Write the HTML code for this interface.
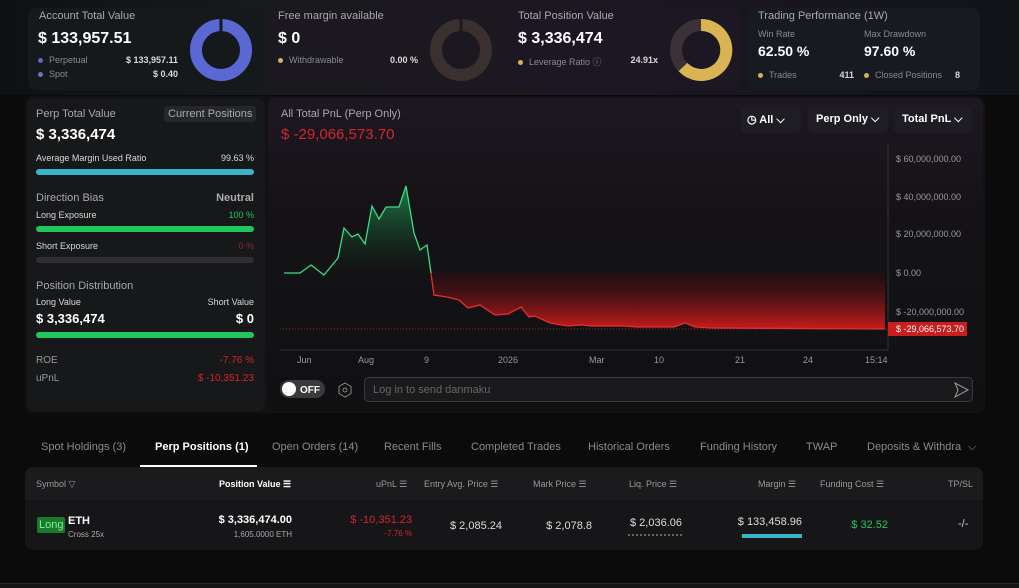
<!DOCTYPE html>
<html><head><meta charset="utf-8"><style>
*{box-sizing:border-box;margin:0;padding:0}
body{width:1019px;height:588px;overflow:hidden;background:#0b0b0c;font-family:"Liberation Sans",sans-serif;color:#fff;position:relative;font-size:10px}
.abs{position:absolute}
.card{position:absolute;border-radius:8px}
.g{color:#8a8a90}
.lbl{color:#a8a8ad;font-size:11px}
.dot{display:inline-block;width:5px;height:5px;border-radius:50%;margin-right:6px;vertical-align:middle}
.big{font-weight:bold;font-size:16px}
.bar{position:absolute;height:6px;border-radius:3px}
.sm{font-size:9px;color:#d8d8d8}
.r{color:#d3262c}
.gr{color:#22c55e}
</style></head><body>
<div class="abs" style="left:0;top:0;width:1019px;height:95px;background:linear-gradient(90deg,#0e1112 0%,#171a1c 25%,#1d1720 50%,#1a1621 70%,#111317 100%)"></div>
<!-- cards -->
<div class="card" style="left:28px;top:8px;width:232px;height:82px;background:#15191b"></div>
<div class="card" style="left:268px;top:8px;width:232px;height:82px;background:#1c1820"></div>
<div class="card" style="left:508px;top:8px;width:232px;height:82px;background:#1d1724"></div>
<div class="card" style="left:748px;top:8px;width:232px;height:82px;background:#171a20"></div>
<div class="abs lbl" style="left:39px;top:10px">Account Total Value</div>
<div class="abs big" style="left:38px;top:30px">$ 133,957.51</div>
<div class="abs sm" style="left:38px;top:55px;width:140px"><span class="dot" style="background:#5b66c8"></span><span class="g">Perpetual</span><span style="float:right;font-weight:bold">$ 133,957.11</span></div>
<div class="abs sm" style="left:38px;top:69px;width:140px"><span class="dot" style="background:#6b78b8"></span><span class="g">Spot</span><span style="float:right;font-weight:bold">$ 0.40</span></div>
<svg class="abs" style="left:188px;top:17px" width="66" height="66"><circle cx="33" cy="33" r="25" fill="none" stroke="#5b68d4" stroke-width="12"/><line x1="33" y1="2" x2="33" y2="20" stroke="#15191b" stroke-width="3"/></svg>
<div class="abs lbl" style="left:278px;top:10px">Free margin available</div>
<div class="abs big" style="left:278px;top:30px">$ 0</div>
<div class="abs sm" style="left:278px;top:55px;width:140px"><span class="dot" style="background:#c8b860"></span><span class="g">Withdrawable</span><span style="float:right;font-weight:bold">0.00 %</span></div>
<svg class="abs" style="left:428px;top:17px" width="66" height="66"><circle cx="33" cy="33" r="25" fill="none" stroke="#3a3030" stroke-width="12"/><line x1="33" y1="2" x2="33" y2="20" stroke="#1c1820" stroke-width="3"/></svg>
<div class="abs lbl" style="left:518px;top:10px">Total Position Value</div>
<div class="abs big" style="left:518px;top:30px">$ 3,336,474</div>
<div class="abs sm" style="left:518px;top:55px;width:140px"><span class="dot" style="background:#d4b455"></span><span class="g">Leverage Ratio ⓘ</span><span style="float:right;font-weight:bold">24.91x</span></div>
<svg class="abs" style="left:668px;top:17px" width="66" height="66"><circle cx="33" cy="33" r="25" fill="none" stroke="#3a3236" stroke-width="12"/><path d="M33 8 A25 25 0 1 1 15 50" fill="none" stroke="#d8b552" stroke-width="12"/></svg>
<div class="abs lbl" style="left:758px;top:10px">Trading Performance (1W)</div>
<div class="abs g" style="left:758px;top:29px;font-size:9px">Win Rate</div>
<div class="abs g" style="left:864px;top:29px;font-size:9px">Max Drawdown</div>
<div class="abs" style="left:758px;top:43px;font-weight:bold;font-size:14px">62.50 %</div>
<div class="abs" style="left:864px;top:43px;font-weight:bold;font-size:14px">97.60 %</div>
<div class="abs sm" style="left:758px;top:70px;width:96px"><span class="dot" style="background:#c8b860"></span><span class="g">Trades</span><span style="float:right;font-weight:bold">411</span></div>
<div class="abs sm" style="left:864px;top:70px;width:96px"><span class="dot" style="background:#c8b860"></span><span class="g">Closed Positions</span><span style="float:right;font-weight:bold">8</span></div>

<!-- main panel -->
<div class="abs" style="left:25px;top:96px;width:960px;height:317px;background:#121214;border-radius:8px"></div>
<div class="card" style="left:27px;top:98px;width:238px;height:313px;background:#17181a"></div>
<div class="card" style="left:268px;top:98px;width:715px;height:313px;background:linear-gradient(180deg,#1e1821 0%,#141216 40%,#101012 100%)"></div>
<div class="abs lbl" style="left:36px;top:108px">Perp Total Value</div>
<div class="abs" style="left:164px;top:106px;background:#25272a;color:#aaa;font-size:11px;padding:2px 4px;border-radius:3px">Current Positions</div>
<div class="abs big" style="left:36px;top:126px;font-size:15px">$ 3,336,474</div>
<div class="abs sm" style="left:36px;top:153px;width:218px">Average Margin Used Ratio<span style="float:right">99.63 %</span></div>
<div class="bar" style="left:36px;top:169px;width:218px;background:#3bb3c9"></div>
<div class="abs lbl" style="left:36px;top:192px;width:218px">Direction Bias<span style="float:right;font-weight:bold;color:#aaa">Neutral</span></div>
<div class="abs sm" style="left:36px;top:210px;width:218px">Long Exposure<span style="float:right" class="gr">100 %</span></div>
<div class="bar" style="left:36px;top:226px;width:218px;background:#22c55e"></div>
<div class="abs sm" style="left:36px;top:241px;width:218px">Short Exposure<span style="float:right;color:#8a2a2e">0 %</span></div>
<div class="bar" style="left:36px;top:257px;width:218px;background:#2f2f31"></div>
<div class="abs lbl" style="left:36px;top:280px">Position Distribution</div>
<div class="abs sm" style="left:36px;top:297px;width:218px">Long Value<span style="float:right">Short Value</span></div>
<div class="abs" style="left:36px;top:311px;width:218px;font-weight:bold;font-size:13px">$ 3,336,474<span style="float:right">$ 0</span></div>
<div class="bar" style="left:36px;top:332px;width:218px;background:#22c55e"></div>
<div class="abs" style="left:36px;top:355px;width:218px;font-size:10px;color:#999">ROE<span style="float:right" class="r">-7.76 %</span></div>
<div class="abs" style="left:36px;top:373px;width:218px;font-size:10px;color:#999">uPnL<span style="float:right" class="r">$ -10,351.23</span></div>

<!-- chart -->
<div class="abs lbl" style="left:281px;top:108px">All Total PnL (Perp Only)</div>
<div class="abs r" style="left:281px;top:126px;font-size:15px">$ -29,066,573.70</div>
<div class="abs" style="left:741px;top:107px;width:60px;height:26px;background:#1f1d24;border-radius:5px;font-size:11px;font-weight:bold;padding:6px 6px">◷ All ⌵</div>
<div class="abs" style="left:808px;top:107px;width:80px;height:26px;background:#1f1d24;border-radius:5px;font-size:11px;font-weight:bold;padding:6px 8px">Perp Only ⌵</div>
<div class="abs" style="left:894px;top:107px;width:78px;height:26px;background:#1f1d24;border-radius:5px;font-size:11px;font-weight:bold;padding:6px 8px">Total PnL ⌵</div>
<svg class="abs" style="left:268px;top:98px" width="715" height="313" viewBox="268 98 715 313">
<defs>
<linearGradient id="gg" x1="0" y1="186" x2="0" y2="275" gradientUnits="userSpaceOnUse"><stop offset="0" stop-color="#1f8a4c" stop-opacity=".9"/><stop offset="1" stop-color="#0f1210" stop-opacity=".3"/></linearGradient>
<linearGradient id="rg" x1="0" y1="272" x2="0" y2="330" gradientUnits="userSpaceOnUse"><stop offset="0" stop-color="#3a0c10" stop-opacity=".3"/><stop offset="1" stop-color="#d01c1c"/></linearGradient>
</defs>
<path d="M284 273 L300 273 L311 265 L324 275 L338 258 L344 228 L352 237 L358 234 L365 244 L372 206 L379 219 L386 207 L399 207 L406 186 L414 233 L420 250 L427 245 L431 275 Z" fill="url(#gg)"/>
<path d="M431 272 L434 295 L447 297 L459 300 L468 308 L480 305 L495 315 L508 314 L521 307 L529 317 L535 316 L550 323 L568 326 L582 325 L591 326 L624 326 L637 327 L674 327 L685 323 L695 327 L711 328 L885 329 L885 272 Z" fill="url(#rg)"/>
<path d="M284 273 L300 273 L311 265 L324 275 L338 258 L344 228 L352 237 L358 234 L365 244 L372 206 L379 219 L386 207 L399 207 L406 186 L414 233 L420 250 L427 245 L431 273" fill="none" stroke="#3ddc84" stroke-width="1.3"/>
<path d="M431 273 L434 295 L447 297 L459 300 L468 308 L480 305 L495 315 L508 314 L521 307 L529 317 L535 316 L550 323 L568 326 L582 325 L591 326 L624 326 L637 327 L674 327 L685 323 L695 327 L711 328 L885 329" fill="none" stroke="#e03030" stroke-width="1.3"/>
<line x1="280" y1="329" x2="888" y2="329" stroke="#c0392b" stroke-dasharray="1 2" stroke-width=".8"/>
<line x1="888" y1="145" x2="888" y2="350" stroke="#333" stroke-width="1"/>
<line x1="280" y1="350" x2="888" y2="350" stroke="#333" stroke-width="1"/>
<g font-family="Liberation Sans" font-size="9" fill="#999">
<text x="896" y="162">$ 60,000,000.00</text><text x="896" y="200">$ 40,000,000.00</text><text x="896" y="237">$ 20,000,000.00</text><text x="896" y="276">$ 0.00</text><text x="896" y="315">$ -20,000,000.00</text>
<text x="297" y="363">Jun</text><text x="358" y="363">Aug</text><text x="424" y="363">9</text><text x="498" y="363">2026</text><text x="589" y="363">Mar</text><text x="654" y="363">10</text><text x="735" y="363">21</text><text x="803" y="363">24</text><text x="865" y="363">15:14</text>
</g>
<rect x="888" y="322" width="79" height="14" fill="#c81e1e"/>
<text x="896" y="332" font-family="Liberation Sans" font-size="9" fill="#fff">$ -29,066,573.70</text>
<rect x="280" y="380" width="45" height="18" rx="9" fill="#3a3a3c"/><circle cx="289" cy="389" r="7" fill="#fff"/><text x="300" y="393" font-family="Liberation Sans" font-size="10" fill="#fff" font-weight="bold">OFF</text>
<polygon points="345,383 351,386.5 351,393.5 345,397 339,393.5 339,386.5" fill="none" stroke="#888"/><circle cx="345" cy="390" r="2" fill="none" stroke="#888"/>
<rect x="364.5" y="377.5" width="608" height="24" rx="4" fill="#1a1a1c" stroke="#3a3a3c"/>
<text x="373" y="393" font-family="Liberation Sans" font-size="11" fill="#666">Log in to send danmaku</text>
<path d="M955 383 L968 390 L955 397 L958 390 Z" fill="none" stroke="#999"/>
</svg>

<!-- tabs -->
<div class="abs" style="left:41px;top:441px;font-size:11px;color:#8a8a8f;white-space:nowrap;word-spacing:0">
<span style="position:absolute;left:0">Spot Holdings (3)</span>
<span style="position:absolute;left:114px;color:#fff;font-weight:bold">Perp Positions (1)</span>
<span style="position:absolute;left:231px">Open Orders (14)</span>
<span style="position:absolute;left:343px">Recent Fills</span>
<span style="position:absolute;left:430px">Completed Trades</span>
<span style="position:absolute;left:547px">Historical Orders</span>
<span style="position:absolute;left:659px">Funding History</span>
<span style="position:absolute;left:765px">TWAP</span>
<span style="position:absolute;left:826px;width:130px;overflow:hidden">Deposits &amp; Withdra</span>
<span style="position:absolute;left:927px;color:#3bb3c9">⌵</span>
</div>
<div class="abs" style="left:140px;top:465px;width:117px;height:2px;background:#fff"></div>
<div class="card" style="left:25px;top:467px;width:958px;height:83px;background:#161618"></div>
<div class="abs" style="left:25px;top:467px;width:958px;height:33px;background:#1b1b1d;border-radius:8px 8px 0 0"></div>
<div class="abs" style="left:0;top:479px;width:1019px;font-size:9px;color:#999">
<span class="abs" style="left:36px">Symbol ▽</span>
<span class="abs" style="left:219px;color:#fff;font-weight:bold">Position Value ☰</span>
<span class="abs" style="left:376px">uPnL ☰</span>
<span class="abs" style="left:424px">Entry Avg. Price ☰</span>
<span class="abs" style="left:533px">Mark Price ☰</span>
<span class="abs" style="left:629px">Liq. Price ☰</span>
<span class="abs" style="left:758px">Margin ☰</span>
<span class="abs" style="left:820px">Funding Cost ☰</span>
<span class="abs" style="left:948px">TP/SL</span>
</div>
<div class="abs" style="left:37px;top:517px;background:#1a7a2e;color:#7ff09a;font-size:11px;padding:2px 2px;border-radius:2px">Long</div>
<div class="abs" style="left:68px;top:515px;font-weight:bold;font-size:11px">ETH</div>
<div class="abs" style="left:68px;top:530px;font-size:8px;color:#aaa">Cross 25x</div>
<div class="abs" style="left:180px;top:514px;width:112px;text-align:right;font-weight:bold;font-size:11px">$ 3,336,474.00</div>
<div class="abs" style="left:180px;top:530px;width:112px;text-align:right;font-size:8px;color:#aaa">1,605.0000 ETH</div>
<div class="abs r" style="left:330px;top:514px;width:82px;text-align:right;font-size:11px">$ -10,351.23</div>
<div class="abs r" style="left:330px;top:529px;width:82px;text-align:right;font-size:8px">-7.76 %</div>
<div class="abs" style="left:420px;top:520px;width:82px;text-align:right;font-size:11px;color:#ddd">$ 2,085.24</div>
<div class="abs" style="left:510px;top:520px;width:82px;text-align:right;font-size:11px;color:#ddd">$ 2,078.8</div>
<div class="abs" style="left:600px;top:517px;width:82px;text-align:right;font-size:11px;color:#ddd">$ 2,036.06</div>
<div class="abs" style="left:628px;top:534px;width:54px;border-top:2px dotted #665"></div>
<div class="abs" style="left:720px;top:516px;width:82px;text-align:right;font-size:11px;color:#ddd">$ 133,458.96</div>
<div class="abs" style="left:742px;top:534px;width:60px;height:4px;background:#3bb3c9"></div>
<div class="abs gr" style="left:808px;top:519px;width:80px;text-align:right;font-size:11px">$ 32.52</div>
<div class="abs" style="left:958px;top:518px;font-size:11px;color:#ccc">-/-</div>
<div class="abs" style="left:0;top:583px;width:1019px;height:5px;background:#151515;border-top:1px solid #2a2a2a"></div>
</body></html>
